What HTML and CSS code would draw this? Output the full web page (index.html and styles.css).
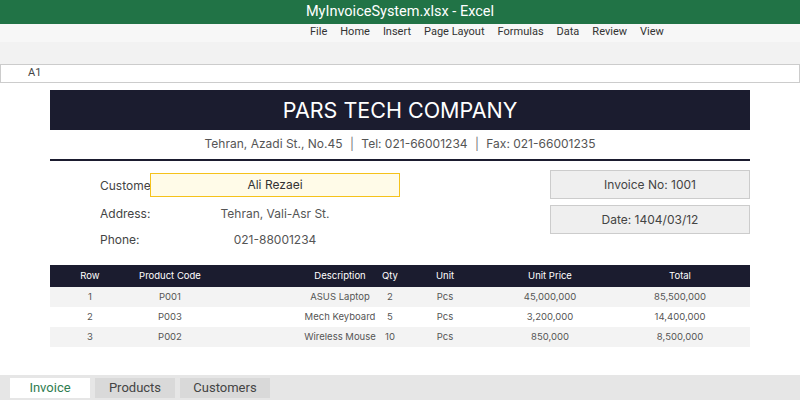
FILE: index.html
```html
<!DOCTYPE html>
<html lang="en">
<head>
  <meta charset="UTF-8" />
  <meta name="viewport" content="width=device-width, initial-scale=1.0" />
  <title>MyInvoiceSystem.xlsx - Excel</title>
  <link rel="stylesheet" href="styles.css">
</head>

<body>
  <div class="titlebar">MyInvoiceSystem.xlsx - Excel</div>
  <div class="ribbon">
    <span>File</span>
    <span>Home</span>
    <span>Insert</span>
    <span>Page Layout</span>
    <span>Formulas</span>
    <span>Data</span>
    <span>Review</span>
    <span>View</span>
  </div>
  <div class="toolbar"></div>
  <div class="formula-bar">A1</div>

  <div class="sheet">
    <div class="invoice">
      <div class="company">PARS TECH COMPANY</div>
      <div class="contact">
        Tehran, Azadi St., No.45 <span class="sep">|</span> Tel: 021-66001234 <span class="sep">|</span> Fax: 021-66001235
      </div>

      <div class="info">
        <div class="customer">
          <div class="info-row first">
            <span class="label">Customer:</span>
            <span class="value highlight">Ali Rezaei</span>
          </div>
          <div class="info-row">
            <span class="label">Address:</span>
            <span class="value">Tehran, Vali-Asr St.</span>
          </div>
          <div class="info-row">
            <span class="label">Phone:</span>
            <span class="value">021-88001234</span>
          </div>
        </div>
        <div class="meta">
          <div class="meta-box">Invoice No: 1001</div>
          <div class="meta-box">Date: 1404/03/12</div>
        </div>
      </div>

      <div class="items">
        <div class="items-row head">
          <span>Row</span>
          <span>Product Code</span>
          <span class="desc">Description</span>
          <span>Qty</span>
          <span>Unit</span>
          <span>Unit Price</span>
          <span>Total</span>
        </div>
        <div class="items-row odd">
          <span>1</span>
          <span>P001</span>
          <span class="desc">ASUS Laptop</span>
          <span>2</span>
          <span>Pcs</span>
          <span>45,000,000</span>
          <span>85,500,000</span>
        </div>
        <div class="items-row">
          <span>2</span>
          <span>P003</span>
          <span class="desc">Mech Keyboard</span>
          <span>5</span>
          <span>Pcs</span>
          <span>3,200,000</span>
          <span>14,400,000</span>
        </div>
        <div class="items-row odd">
          <span>3</span>
          <span>P002</span>
          <span class="desc">Wireless Mouse</span>
          <span>10</span>
          <span>Pcs</span>
          <span>850,000</span>
          <span>8,500,000</span>
        </div>
      </div>
    </div>
  </div>

  <div class="tabs">
    <div class="tab active">Invoice</div>
    <div class="tab">Products</div>
    <div class="tab wide">Customers</div>
  </div>
</body>
</html>
```

FILE: styles.css
```css
body {
  margin: 0;
  height: 100vh;
  display: flex;
  flex-direction: column;
  font-family: 'Inter', 'Liberation Sans', sans-serif;
  background: #fff;
  overflow: hidden;
}

.titlebar {
  height: 24px;
  line-height: 24px;
  background: #217346;
  color: #fff;
  text-align: center;
  font-family: 'Roboto', sans-serif;
  font-size: 14.5px;
}

.ribbon {
  height: 18px;
  background: #f7f7f7;
  display: flex;
  gap: 13px;
  padding-left: 310px;
  font-family: 'Roboto', sans-serif;
  font-size: 11px;
  line-height: 16px;
  color: #333;
}

.toolbar {
  height: 22px;
  background: #f2f2f2;
}

.formula-bar {
  height: 19px;
  box-sizing: border-box;
  border: 1px solid #ccc;
  background: #fff;
  padding-left: 27px;
  font-family: 'Roboto', sans-serif;
  font-size: 11px;
  line-height: 16px;
  color: #444;
}

.sheet {
  flex: 1;
  padding-top: 7px;
}

.invoice {
  width: 700px;
  margin: 0 auto;
}

.company {
  height: 40px;
  line-height: 40px;
  background: #1b1c2f;
  color: #fff;
  text-align: center;
  font-size: 21.5px;
}

.contact {
  padding: 6px 0 7px;
  line-height: 16px;
  text-align: center;
  font-size: 12px;
  color: #555;
  border-bottom: 2px solid #1b1c2f;
}

.sep {
  margin: 0 4px;
  color: #777;
}

.info {
  display: flex;
  justify-content: space-between;
  padding-left: 50px;
  height: 91px;
}

.customer {
  width: 300px;
  padding-top: 12px;
  font-size: 12px;
  color: #444;
}

.info-row {
  display: flex;
  height: 26px;
  align-items: center;
}

.info-row.first {
  height: 24px;
  margin-bottom: 3px;
}

.label {
  width: 50px;
  white-space: nowrap;
  overflow: hidden;
}

.value {
  flex: 1;
  text-align: center;
  color: #555;
}

.highlight {
  height: 24px;
  line-height: 22px;
  box-sizing: border-box;
  background: #fffbe8;
  border: 1px solid #f5c21b;
  color: #333;
}

.meta {
  padding-top: 9px;
  display: flex;
  flex-direction: column;
  gap: 6px;
}

.meta-box {
  width: 200px;
  height: 29px;
  line-height: 27px;
  box-sizing: border-box;
  background: #efefef;
  border: 1px solid #ccc;
  text-align: center;
  font-size: 12px;
  color: #444;
}

.items {
  margin-top: 13px;
  font-size: 9.5px;
  color: #555;
}

.items-row {
  display: grid;
  grid-template-columns: 80px 80px 170px 20px 90px 120px 140px;
  height: 20px;
  line-height: 20px;
  text-align: center;
}

.items-row.head {
  height: 22px;
  line-height: 21px;
  background: #1b1c2f;
  color: #fff;
}

.items-row.odd {
  background: #f3f3f3;
}

.desc {
  padding-left: 90px;
  white-space: nowrap;
}

.tabs {
  height: 25px;
  box-sizing: border-box;
  background: #e6e6e6;
  display: flex;
  gap: 5px;
  padding: 3px 10px 2px;
  font-family: 'Roboto', sans-serif;
  font-size: 13px;
}

.tab {
  width: 80px;
  line-height: 20px;
  text-align: center;
  background: #d9d9d9;
  color: #444;
}

.tab.wide {
  width: 90px;
}

.tab.active {
  background: #fff;
  color: #2f7d50;
}
```
